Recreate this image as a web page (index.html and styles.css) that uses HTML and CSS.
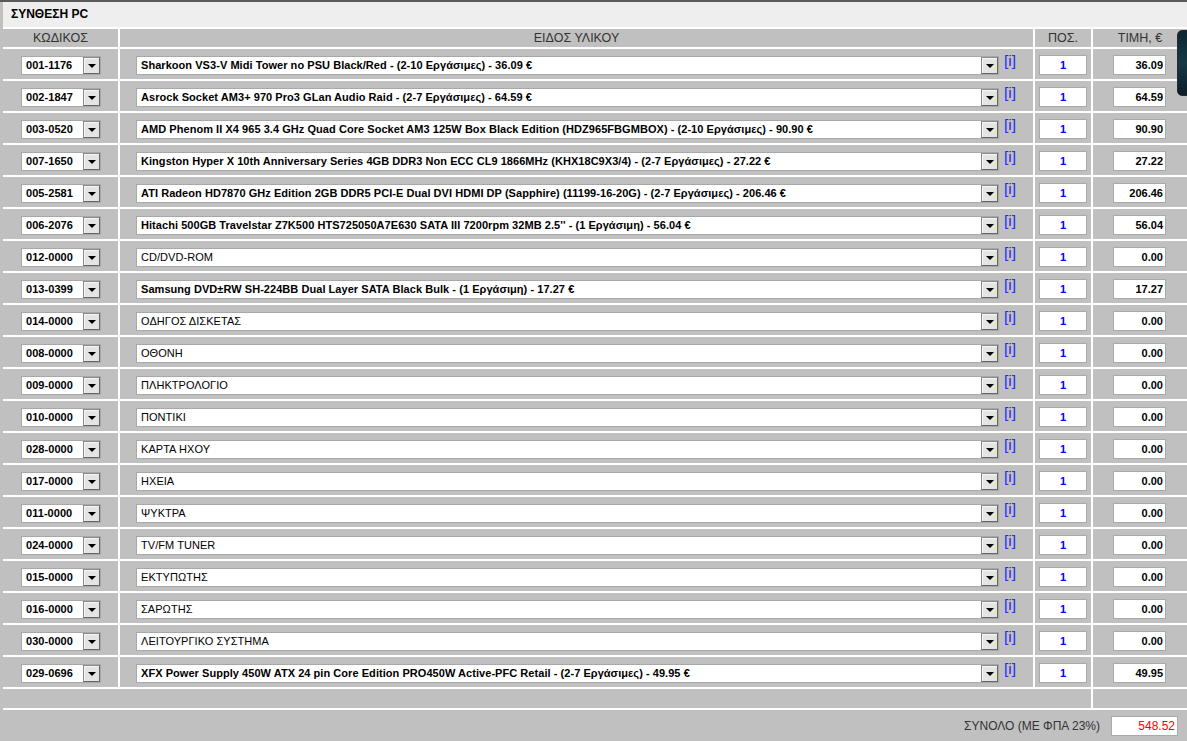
FILE: index.html
```html
<!DOCTYPE html>
<html lang="el">
<head>
<meta charset="utf-8">
<title>ΣΥΝΘΕΣΗ PC</title>
<link rel="stylesheet" href="styles.css">
</head>
<body>
<div class="topline"></div>
<div class="page">
  <div class="title">ΣΥΝΘΕΣΗ PC</div>
  <div class="grid">
    <div class="hd">ΚΩΔΙΚΟΣ</div>
    <div class="hd">ΕΙΔΟΣ ΥΛΙΚΟΥ</div>
    <div class="hd">ΠΟΣ.</div>
    <div class="hd">ΤΙΜΗ, €</div>

    <div class="c code"><div class="sel sel-code"><span class="val">001-1176</span><span class="btn"></span></div></div>
    <div class="c desc"><div class="sel sel-desc"><span class="val">Sharkoon VS3-V Midi Tower no PSU Black/Red - (2-10 Εργάσιμες) - 36.09 €</span><span class="btn"></span></div><a class="info">[i]</a></div>
    <div class="c qty"><div class="box qbox">1</div></div>
    <div class="c price"><div class="box pbox">36.09</div></div>

    <div class="c code"><div class="sel sel-code"><span class="val">002-1847</span><span class="btn"></span></div></div>
    <div class="c desc"><div class="sel sel-desc"><span class="val">Asrock Socket AM3+ 970 Pro3 GLan Audio Raid - (2-7 Εργάσιμες) - 64.59 €</span><span class="btn"></span></div><a class="info">[i]</a></div>
    <div class="c qty"><div class="box qbox">1</div></div>
    <div class="c price"><div class="box pbox">64.59</div></div>

    <div class="c code"><div class="sel sel-code"><span class="val">003-0520</span><span class="btn"></span></div></div>
    <div class="c desc"><div class="sel sel-desc"><span class="val">AMD Phenom II X4 965 3.4 GHz Quad Core Socket AM3 125W Box Black Edition (HDZ965FBGMBOX) - (2-10 Εργάσιμες) - 90.90 €</span><span class="btn"></span></div><a class="info">[i]</a></div>
    <div class="c qty"><div class="box qbox">1</div></div>
    <div class="c price"><div class="box pbox">90.90</div></div>

    <div class="c code"><div class="sel sel-code"><span class="val">007-1650</span><span class="btn"></span></div></div>
    <div class="c desc"><div class="sel sel-desc"><span class="val">Kingston Hyper X 10th Anniversary Series 4GB DDR3 Non ECC CL9 1866MHz (KHX18C9X3/4) - (2-7 Εργάσιμες) - 27.22 €</span><span class="btn"></span></div><a class="info">[i]</a></div>
    <div class="c qty"><div class="box qbox">1</div></div>
    <div class="c price"><div class="box pbox">27.22</div></div>

    <div class="c code"><div class="sel sel-code"><span class="val">005-2581</span><span class="btn"></span></div></div>
    <div class="c desc"><div class="sel sel-desc"><span class="val">ATI Radeon HD7870 GHz Edition 2GB DDR5 PCI-E Dual DVI HDMI DP (Sapphire) (11199-16-20G) - (2-7 Εργάσιμες) - 206.46 €</span><span class="btn"></span></div><a class="info">[i]</a></div>
    <div class="c qty"><div class="box qbox">1</div></div>
    <div class="c price"><div class="box pbox">206.46</div></div>

    <div class="c code"><div class="sel sel-code"><span class="val">006-2076</span><span class="btn"></span></div></div>
    <div class="c desc"><div class="sel sel-desc"><span class="val">Hitachi 500GB Travelstar Z7K500 HTS725050A7E630 SATA III 7200rpm 32MB 2.5'' - (1 Εργάσιμη) - 56.04 €</span><span class="btn"></span></div><a class="info">[i]</a></div>
    <div class="c qty"><div class="box qbox">1</div></div>
    <div class="c price"><div class="box pbox">56.04</div></div>

    <div class="c code"><div class="sel sel-code"><span class="val">012-0000</span><span class="btn"></span></div></div>
    <div class="c desc"><div class="sel sel-desc"><span class="val plain">CD/DVD-ROM</span><span class="btn"></span></div><a class="info">[i]</a></div>
    <div class="c qty"><div class="box qbox">1</div></div>
    <div class="c price"><div class="box pbox">0.00</div></div>

    <div class="c code"><div class="sel sel-code"><span class="val">013-0399</span><span class="btn"></span></div></div>
    <div class="c desc"><div class="sel sel-desc"><span class="val">Samsung DVD±RW SH-224BB Dual Layer SATA Black Bulk - (1 Εργάσιμη) - 17.27 €</span><span class="btn"></span></div><a class="info">[i]</a></div>
    <div class="c qty"><div class="box qbox">1</div></div>
    <div class="c price"><div class="box pbox">17.27</div></div>

    <div class="c code"><div class="sel sel-code"><span class="val">014-0000</span><span class="btn"></span></div></div>
    <div class="c desc"><div class="sel sel-desc"><span class="val plain">ΟΔΗΓΟΣ ΔΙΣΚΕΤΑΣ</span><span class="btn"></span></div><a class="info">[i]</a></div>
    <div class="c qty"><div class="box qbox">1</div></div>
    <div class="c price"><div class="box pbox">0.00</div></div>

    <div class="c code"><div class="sel sel-code"><span class="val">008-0000</span><span class="btn"></span></div></div>
    <div class="c desc"><div class="sel sel-desc"><span class="val plain">ΟΘΟΝΗ</span><span class="btn"></span></div><a class="info">[i]</a></div>
    <div class="c qty"><div class="box qbox">1</div></div>
    <div class="c price"><div class="box pbox">0.00</div></div>

    <div class="c code"><div class="sel sel-code"><span class="val">009-0000</span><span class="btn"></span></div></div>
    <div class="c desc"><div class="sel sel-desc"><span class="val plain">ΠΛΗΚΤΡΟΛΟΓΙΟ</span><span class="btn"></span></div><a class="info">[i]</a></div>
    <div class="c qty"><div class="box qbox">1</div></div>
    <div class="c price"><div class="box pbox">0.00</div></div>

    <div class="c code"><div class="sel sel-code"><span class="val">010-0000</span><span class="btn"></span></div></div>
    <div class="c desc"><div class="sel sel-desc"><span class="val plain">ΠΟΝΤΙΚΙ</span><span class="btn"></span></div><a class="info">[i]</a></div>
    <div class="c qty"><div class="box qbox">1</div></div>
    <div class="c price"><div class="box pbox">0.00</div></div>

    <div class="c code"><div class="sel sel-code"><span class="val">028-0000</span><span class="btn"></span></div></div>
    <div class="c desc"><div class="sel sel-desc"><span class="val plain">ΚΑΡΤΑ ΗΧΟΥ</span><span class="btn"></span></div><a class="info">[i]</a></div>
    <div class="c qty"><div class="box qbox">1</div></div>
    <div class="c price"><div class="box pbox">0.00</div></div>

    <div class="c code"><div class="sel sel-code"><span class="val">017-0000</span><span class="btn"></span></div></div>
    <div class="c desc"><div class="sel sel-desc"><span class="val plain">ΗΧΕΙΑ</span><span class="btn"></span></div><a class="info">[i]</a></div>
    <div class="c qty"><div class="box qbox">1</div></div>
    <div class="c price"><div class="box pbox">0.00</div></div>

    <div class="c code"><div class="sel sel-code"><span class="val">011-0000</span><span class="btn"></span></div></div>
    <div class="c desc"><div class="sel sel-desc"><span class="val plain">ΨΥΚΤΡΑ</span><span class="btn"></span></div><a class="info">[i]</a></div>
    <div class="c qty"><div class="box qbox">1</div></div>
    <div class="c price"><div class="box pbox">0.00</div></div>

    <div class="c code"><div class="sel sel-code"><span class="val">024-0000</span><span class="btn"></span></div></div>
    <div class="c desc"><div class="sel sel-desc"><span class="val plain">TV/FM TUNER</span><span class="btn"></span></div><a class="info">[i]</a></div>
    <div class="c qty"><div class="box qbox">1</div></div>
    <div class="c price"><div class="box pbox">0.00</div></div>

    <div class="c code"><div class="sel sel-code"><span class="val">015-0000</span><span class="btn"></span></div></div>
    <div class="c desc"><div class="sel sel-desc"><span class="val plain">ΕΚΤΥΠΩΤΗΣ</span><span class="btn"></span></div><a class="info">[i]</a></div>
    <div class="c qty"><div class="box qbox">1</div></div>
    <div class="c price"><div class="box pbox">0.00</div></div>

    <div class="c code"><div class="sel sel-code"><span class="val">016-0000</span><span class="btn"></span></div></div>
    <div class="c desc"><div class="sel sel-desc"><span class="val plain">ΣΑΡΩΤΗΣ</span><span class="btn"></span></div><a class="info">[i]</a></div>
    <div class="c qty"><div class="box qbox">1</div></div>
    <div class="c price"><div class="box pbox">0.00</div></div>

    <div class="c code"><div class="sel sel-code"><span class="val">030-0000</span><span class="btn"></span></div></div>
    <div class="c desc"><div class="sel sel-desc"><span class="val plain">ΛΕΙΤΟΥΡΓΙΚΟ ΣΥΣΤΗΜΑ</span><span class="btn"></span></div><a class="info">[i]</a></div>
    <div class="c qty"><div class="box qbox">1</div></div>
    <div class="c price"><div class="box pbox">0.00</div></div>

    <div class="c code"><div class="sel sel-code"><span class="val">029-0696</span><span class="btn"></span></div></div>
    <div class="c desc"><div class="sel sel-desc"><span class="val">XFX Power Supply 450W ATX 24 pin Core Edition PRO450W Active-PFC Retail - (2-7 Εργάσιμες) - 49.95 €</span><span class="btn"></span></div><a class="info">[i]</a></div>
    <div class="c qty"><div class="box qbox">1</div></div>
    <div class="c price"><div class="box pbox">49.95</div></div>

    <div class="blank wide"></div>
    <div class="blank"></div>

    <div class="total">
      <span class="total-label">ΣΥΝΟΛΟ (ΜΕ ΦΠΑ 23%)</span>
      <div class="box tbox">548.52</div>
    </div>
  </div>
</div>
<div class="widget"></div>
</body>
</html>
```
FILE: styles.css
```css
html, body {
  margin: 0;
  padding: 0;
}
body {
  background: #c0c0c0;
  font-family: "Liberation Sans", Arial, sans-serif;
  font-size: 12px;
  color: #000;
  width: 1187px;
  height: 741px;
  overflow: hidden;
  position: relative;
}
.topline {
  height: 2px;
  background: #5a5a5a;
}
.page {
  margin-left: 3px;
}
.title {
  height: 25px;
  background: #eeeeee;
  font-weight: bold;
  font-size: 12px;
  line-height: 25px;
  padding-left: 8px;
  box-sizing: border-box;
}
.grid {
  display: grid;
  grid-template-columns: 115px 913px 56px 1fr;
  grid-template-rows: 18px repeat(20, 30px) 19px 40px;
  gap: 2px;
  padding-top: 2px;
  background: #ffffff;
}
.grid > div {
  background: #c0c0c0;
}
.hd {
  display: flex;
  align-items: center;
  justify-content: center;
  color: #333;
  font-size: 12.5px;
}
.c {
  display: flex;
  align-items: center;
  padding-top: 2px;
  box-sizing: border-box;
}
.code {
  padding-left: 18px;
}
.desc {
  padding-left: 16px;
}
.qty {
  justify-content: center;
}
.price {
  padding-left: 20px;
}
.sel {
  display: flex;
  height: 19px;
  box-sizing: border-box;
  background: #fff;
  border: 1px solid #a8a8a8;
}
.sel-code {
  width: 80px;
}
.sel-desc {
  width: 863px;
}
.val {
  flex: 1;
  font-weight: bold;
  font-size: 11px;
  line-height: 17px;
  padding-left: 4px;
  white-space: nowrap;
  overflow: hidden;
  letter-spacing: 0.05px;
}
.val.plain {
  font-weight: normal;
}
.btn {
  width: 17px;
  height: 17px;
  box-sizing: border-box;
  background: #e4e4e4;
  border: 1px solid;
  border-color: #8a8a8a #666 #666 #8a8a8a;
  box-shadow: inset 1px 1px 0 #f6f6f6;
  position: relative;
}
.btn::after {
  content: "";
  position: absolute;
  left: 4px;
  top: 6px;
  border-left: 4px solid transparent;
  border-right: 4px solid transparent;
  border-top: 4px solid #000;
}
.info {
  color: #2a2aff;
  font-size: 15.5px;
  margin-left: 5px;
  margin-top: -9px;
  cursor: pointer;
}
.box {
  height: 20px;
  box-sizing: border-box;
  background: #fff;
  border: 1px solid #a9a9a9;
  font-size: 11px;
  line-height: 18px;
}
.qbox {
  width: 48px;
  text-align: center;
  color: #0000ff;
  font-weight: bold;
}
.pbox {
  width: 53px;
  text-align: right;
  padding-right: 2px;
  font-weight: bold;
}
.blank.wide {
  grid-column: 1 / 4;
}
.total {
  grid-column: 1 / 5;
  display: flex;
  align-items: flex-start;
  justify-content: flex-end;
  padding-top: 6px;
  padding-right: 9px;
}
.total-label {
  color: #333;
  font-size: 12px;
  line-height: 20px;
  margin-right: 11px;
}
.tbox {
  width: 67px;
  color: #ff0000;
  text-align: right;
  padding-right: 2px;
  font-size: 12px;
}
.widget {
  position: absolute;
  left: 1177px;
  top: 30px;
  width: 24px;
  height: 66px;
  border-radius: 5px;
  background: linear-gradient(180deg, #0e2632 0%, #163847 50%, #0c1e28 100%);
  border: 1px solid #2a2a2a;
  box-sizing: border-box;
}
```
